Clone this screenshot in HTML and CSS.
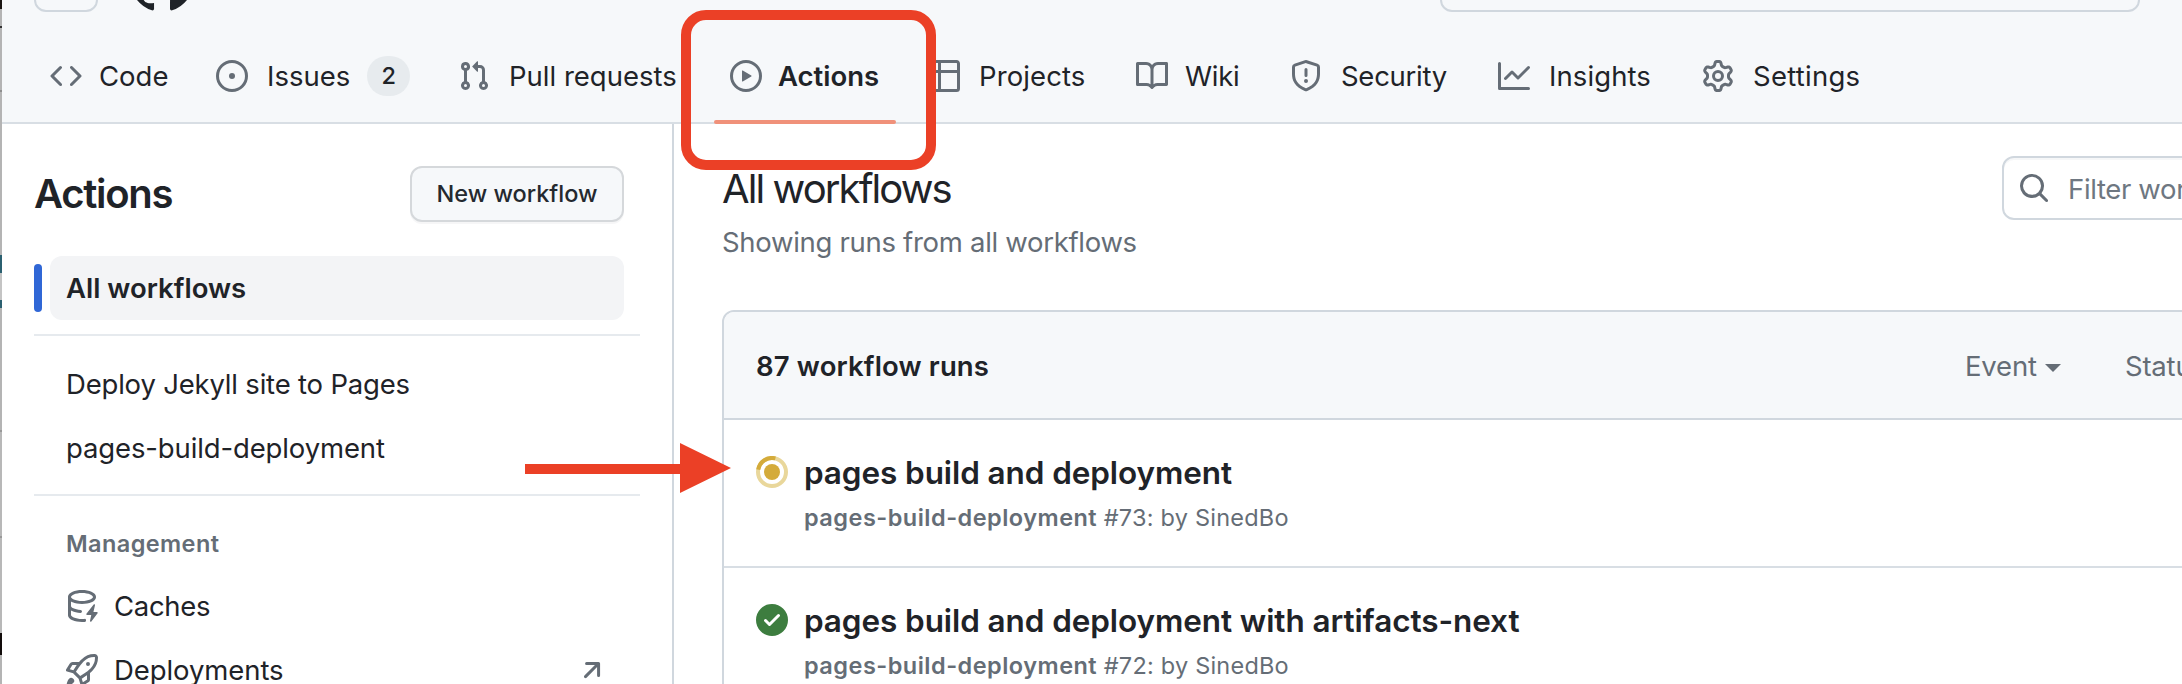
FILE: index.html
```
<!DOCTYPE html>
<html lang="en">
<head>
<meta charset="utf-8">
<title>Workflow runs</title>
<link rel="stylesheet" href="styles.css">
</head>
<body>
<div class="window">
  <div class="edge"></div>
  <div class="page">
    <header class="topbar">
      <span class="menu-button"></span>
      <svg class="mark" viewBox="0 0 16 16"><path d="M8 0c4.42 0 8 3.58 8 8a8.013 8.013 0 0 1-5.45 7.59c-.4.08-.55-.17-.55-.38 0-.27.01-1.13.01-2.2 0-.75-.25-1.23-.54-1.48 1.78-.2 3.65-.88 3.65-3.95 0-.88-.31-1.59-.82-2.15.08-.2.36-1.02-.08-2.12 0 0-.67-.22-2.2.82-.64-.18-1.32-.27-2-.27-.68 0-1.36.09-2 .27-1.53-1.03-2.2-.82-2.2-.82-.44 1.1-.16 1.92-.08 2.12-.51.56-.82 1.28-.82 2.15 0 3.06 1.86 3.75 3.64 3.95-.23.2-.44.55-.51 1.07-.46.21-1.61.55-2.33-.66-.15-.24-.6-.83-1.23-.82-.67.01-.27.38.01.53.34.19.73.9.82 1.13.16.45.68 1.31 2.69.94 0 .67.01 1.3.01 1.49 0 .21-.15.45-.55.38A7.995 7.995 0 0 1 0 8c0-4.42 3.58-8 8-8Z"/></svg>
      <span class="global-search"></span>
    </header>

    <nav class="tabs">
      <a class="tab"><svg class="icon" viewBox="0 0 16 16"><path d="m11.28 3.22 4.25 4.25a.75.75 0 0 1 0 1.06l-4.25 4.25a.749.749 0 0 1-1.275-.326.749.749 0 0 1 .215-.734L13.94 8l-3.72-3.72a.749.749 0 0 1 .326-1.275.749.749 0 0 1 .734.215Zm-6.56 0a.751.751 0 0 1 1.042.018.751.751 0 0 1 .018 1.042L2.06 8l3.72 3.72a.749.749 0 0 1-.326 1.275.749.749 0 0 1-.734-.215L.47 8.53a.75.75 0 0 1 0-1.06Z"/></svg><span>Code</span></a>
      <a class="tab roomy"><svg class="icon" viewBox="0 0 16 16"><path d="M8 9.5a1.5 1.5 0 1 0 0-3 1.5 1.5 0 0 0 0 3Z"/><path d="M8 0a8 8 0 1 1 0 16A8 8 0 0 1 8 0ZM1.5 8a6.5 6.5 0 1 0 13 0 6.5 6.5 0 0 0-13 0Z"/></svg><span>Issues</span><span class="counter">2</span></a>
      <a class="tab roomy"><svg class="icon" viewBox="0 0 16 16"><path d="M1.5 3.25a2.25 2.25 0 1 1 3 2.122v5.256a2.251 2.251 0 1 1-1.5 0V5.372A2.25 2.25 0 0 1 1.5 3.25Zm5.677-.177L9.573.677A.25.25 0 0 1 10 .854V2.5h1A2.5 2.5 0 0 1 13.5 5v5.628a2.251 2.251 0 1 1-1.5 0V5a1 1 0 0 0-1-1h-1v1.646a.25.25 0 0 1-.427.177L7.177 3.427a.25.25 0 0 1 0-.354ZM3.75 2.5a.75.75 0 1 0 0 1.5.75.75 0 0 0 0-1.5Zm0 9.5a.75.75 0 1 0 0 1.5.75.75 0 0 0 0-1.5Zm8.25.75a.75.75 0 1 0 1.5 0 .75.75 0 0 0-1.5 0Z"/></svg><span>Pull requests</span></a>
      <a class="tab selected"><svg class="icon" viewBox="0 0 16 16"><path d="M8 0a8 8 0 1 1 0 16A8 8 0 0 1 8 0ZM1.5 8a6.5 6.5 0 1 0 13 0 6.5 6.5 0 0 0-13 0Zm4.879-2.773 4.264 2.559a.25.25 0 0 1 0 .428l-4.264 2.559A.25.25 0 0 1 6 10.559V5.442a.25.25 0 0 1 .379-.215Z"/></svg><span>Actions</span></a>
      <a class="tab roomy wide"><svg class="icon" viewBox="0 0 16 16"><path d="M0 1.75C0 .784.784 0 1.75 0h12.5C15.216 0 16 .784 16 1.75v12.5A1.75 1.75 0 0 1 14.25 16H1.75A1.75 1.75 0 0 1 0 14.25ZM6.5 6.5v8h7.75a.25.25 0 0 0 .25-.25V6.5Zm8-1.5V1.75a.25.25 0 0 0-.25-.25H6.5V5Zm-13 1.5v7.75c0 .138.112.25.25.25H5v-8ZM5 5V1.5H1.75a.25.25 0 0 0-.25.25V5Z"/></svg><span>Projects</span></a>
      <a class="tab narrow"><svg class="icon" viewBox="0 0 16 16"><path d="M0 1.75A.75.75 0 0 1 .75 1h4.253c1.227 0 2.317.59 3 1.501A3.743 3.743 0 0 1 11.006 1h4.245a.75.75 0 0 1 .75.75v10.5a.75.75 0 0 1-.75.75h-4.507a2.25 2.25 0 0 0-1.591.659l-.622.621a.75.75 0 0 1-1.06 0l-.622-.621A2.25 2.25 0 0 0 5.258 13H.75a.75.75 0 0 1-.75-.75Zm7.251 10.324.004-5.073-.002-2.253A2.25 2.25 0 0 0 5.003 2.5H1.5v9h3.757a3.75 3.75 0 0 1 1.994.574ZM8.755 4.75l-.004 7.322a3.752 3.752 0 0 1 1.992-.572H14.5v-9h-3.495a2.25 2.25 0 0 0-2.25 2.25Z"/></svg><span>Wiki</span></a>
      <a class="tab roomy narrow"><svg class="icon" viewBox="0 0 16 16"><path d="M7.467.133a1.748 1.748 0 0 1 1.066 0l5.25 1.68A1.75 1.75 0 0 1 15 3.48V7c0 1.566-.32 3.182-1.303 4.682-.983 1.498-2.585 2.813-5.032 3.855a1.697 1.697 0 0 1-1.33 0c-2.447-1.042-4.049-2.357-5.032-3.855C1.32 10.182 1 8.566 1 7V3.48a1.755 1.755 0 0 1 1.217-1.667Zm.61 1.429a.25.25 0 0 0-.153 0l-5.25 1.68a.25.25 0 0 0-.174.238V7c0 1.358.275 2.666 1.057 3.86.784 1.194 2.121 2.34 4.366 3.297a.196.196 0 0 0 .154 0c2.245-.956 3.582-2.104 4.366-3.298C13.225 9.666 13.5 8.36 13.5 7V3.48a.251.251 0 0 0-.174-.237l-5.25-1.68ZM8.75 4.75v3a.75.75 0 0 1-1.5 0v-3a.75.75 0 0 1 1.5 0ZM9 10.5a1 1 0 1 1-2 0 1 1 0 0 1 2 0Z"/></svg><span>Security</span></a>
      <a class="tab roomy wide"><svg class="icon" viewBox="0 0 16 16"><path d="M1.5 1.75V13.5h13.75a.75.75 0 0 1 0 1.5H.75a.75.75 0 0 1-.75-.75V1.75a.75.75 0 0 1 1.5 0Zm14.28 2.53-5.25 5.25a.75.75 0 0 1-1.06 0L7 7.06 4.28 9.78a.751.751 0 0 1-1.042-.018.751.751 0 0 1-.018-1.042l3.25-3.25a.75.75 0 0 1 1.06 0L10 7.94l4.72-4.72a.751.751 0 0 1 1.042.018.751.751 0 0 1 .018 1.042Z"/></svg><span>Insights</span></a>
      <a class="tab roomy wider"><svg class="icon" viewBox="0 0 16 16"><path d="M8 0a8.2 8.2 0 0 1 .701.031C9.444.095 9.99.645 10.16 1.29l.288 1.107c.018.066.079.158.212.224.231.114.454.243.668.386.123.082.233.09.299.071l1.103-.303c.644-.176 1.392.021 1.82.63.27.385.506.792.704 1.218.315.675.111 1.422-.364 1.891l-.814.806c-.049.048-.098.147-.088.294.016.257.016.515 0 .772-.01.147.038.246.088.294l.814.806c.475.469.679 1.216.364 1.891a7.977 7.977 0 0 1-.704 1.217c-.428.61-1.176.807-1.82.63l-1.102-.302c-.067-.019-.177-.011-.3.071a5.909 5.909 0 0 1-.668.386c-.133.066-.194.158-.211.224l-.29 1.106c-.168.646-.715 1.196-1.458 1.26a8.006 8.006 0 0 1-1.402 0c-.743-.064-1.289-.614-1.458-1.26l-.289-1.106c-.018-.066-.079-.158-.212-.224a5.738 5.738 0 0 1-.668-.386c-.123-.082-.233-.09-.299-.071l-1.103.303c-.644.176-1.392-.021-1.82-.63a8.12 8.12 0 0 1-.704-1.218c-.315-.675-.111-1.422.363-1.891l.815-.806c.05-.048.098-.147.088-.294a6.214 6.214 0 0 1 0-.772c.01-.147-.038-.246-.088-.294l-.815-.806C.635 6.045.431 5.298.746 4.623a7.92 7.92 0 0 1 .704-1.217c.428-.61 1.176-.807 1.82-.63l1.102.302c.067.019.177.011.3-.071.214-.143.437-.272.668-.386.133-.066.194-.158.211-.224l.29-1.106C6.009.645 6.556.095 7.299.03 7.53.01 7.764 0 8 0Zm-.571 1.525c-.036.003-.108.036-.137.146l-.289 1.105c-.147.561-.549.967-.998 1.189-.173.086-.34.183-.5.29-.417.278-.97.423-1.529.27l-1.103-.303c-.109-.03-.175.016-.195.045-.22.312-.412.644-.573.99-.014.031-.021.11.059.19l.815.806c.411.406.562.957.53 1.456a4.709 4.709 0 0 0 0 .582c.032.499-.119 1.05-.53 1.456l-.815.806c-.081.08-.073.159-.059.19.162.346.353.677.573.989.02.03.085.076.195.046l1.102-.303c.56-.153 1.113-.008 1.53.27.161.107.328.204.501.29.447.222.85.629.997 1.189l.289 1.105c.029.109.101.143.137.146a6.6 6.6 0 0 0 1.142 0c.036-.003.108-.036.137-.146l.289-1.105c.147-.561.549-.967.998-1.189.173-.086.34-.183.5-.29.417-.278.97-.423 1.529-.27l1.103.303c.109.029.175-.016.195-.045.22-.313.411-.644.573-.99.014-.031.021-.11-.059-.19l-.815-.806c-.411-.406-.562-.957-.53-1.456a4.709 4.709 0 0 0 0-.582c-.032-.499.119-1.05.53-1.456l.815-.806c.081-.08.073-.159.059-.19a6.464 6.464 0 0 0-.573-.989c-.02-.03-.085-.076-.195-.046l-1.102.303c-.56.153-1.113.008-1.53-.27a4.44 4.44 0 0 0-.501-.29c-.447-.222-.85-.629-.997-1.189l-.289-1.105c-.029-.11-.101-.143-.137-.146a6.6 6.6 0 0 0-1.142 0ZM11 8a3 3 0 1 1-6 0 3 3 0 0 1 6 0ZM9.5 8a1.5 1.5 0 1 0-3.001.001A1.5 1.5 0 0 0 9.5 8Z"/></svg><span>Settings</span></a>
    </nav>

    <div class="columns">
      <aside class="sidebar">
        <div class="sidebar-head"><h2>Actions</h2><button class="new-workflow">New workflow</button></div>
        <div class="current-row"><span class="current-bar"></span><a class="current">All workflows</a></div>
        <hr class="rule">
        <a class="side-link deploy">Deploy Jekyll site to Pages</a>
        <a class="side-link">pages-build-deployment</a>
        <hr class="rule">
        <h3 class="group-title">Management</h3>
        <a class="side-link tool caches"><svg class="icon" viewBox="0 0 16 16"><path d="M2.5 5.724V8c0 .248.238.7 1.169 1.159.874.43 2.144.745 3.62.822a.75.75 0 1 1-.078 1.498c-1.622-.085-3.102-.432-4.204-.975a5.565 5.565 0 0 1-.507-.28V12.5c0 .133.058.318.282.551.227.237.591.483 1.101.707 1.015.447 2.47.742 4.117.742.406 0 .802-.018 1.183-.052a.751.751 0 1 1 .134 1.494C8.89 15.98 8.45 16 8 16c-1.805 0-3.475-.32-4.721-.869-.623-.274-1.173-.619-1.579-1.041-.408-.425-.7-.964-.7-1.59v-9c0-.626.292-1.165.7-1.591.406-.42.956-.766 1.579-1.04C4.525.32 6.195 0 8 0c1.806 0 3.476.32 4.721.869.623.274 1.173.619 1.579 1.041.408.425.7.964.7 1.59 0 .626-.292 1.165-.7 1.591-.406.42-.956.766-1.578 1.04C11.475 6.68 9.805 7 8 7c-1.805 0-3.475-.32-4.721-.869a6.15 6.15 0 0 1-.779-.407Zm0-2.224c0 .133.058.318.282.551.227.237.591.483 1.101.707C4.898 5.205 6.353 5.5 8 5.5c1.646 0 3.101-.295 4.118-.742.508-.224.873-.471 1.1-.708.224-.232.282-.417.282-.55 0-.133-.058-.318-.282-.551-.227-.237-.591-.483-1.101-.707C11.102 1.795 9.647 1.5 8 1.5c-1.646 0-3.101.295-4.118.742-.508.224-.873.471-1.1.708-.224.232-.282.417-.282.55Z"/><path d="M14.49 7.582a.375.375 0 0 0-.66-.313l-3.625 4.625a.375.375 0 0 0 .295.606h2.127l-.619 2.922a.375.375 0 0 0 .666.304l3.125-4.125A.375.375 0 0 0 15.5 11h-1.778l.769-3.418Z"/></svg><span>Caches</span></a>
        <a class="side-link tool"><svg class="icon" viewBox="0 0 16 16"><path d="M14.064 0h.186C15.216 0 16 .784 16 1.75v.186a8.752 8.752 0 0 1-2.564 6.186l-.458.459c-.314.314-.641.616-.979.904v3.207c0 .608-.315 1.172-.833 1.49l-2.774 1.707a.749.749 0 0 1-1.11-.418l-.954-3.102a1.214 1.214 0 0 1-.145-.125L3.754 9.816a1.218 1.218 0 0 1-.124-.145L.528 8.717a.749.749 0 0 1-.418-1.11l1.71-2.774A1.748 1.748 0 0 1 3.31 4h3.204c.288-.338.59-.665.904-.979l.459-.458A8.749 8.749 0 0 1 14.064 0ZM8.938 3.623h-.002l-.458.458c-.76.76-1.437 1.598-2.02 2.5l-1.5 2.317 2.143 2.143 2.317-1.5c.902-.583 1.74-1.26 2.499-2.02l.459-.458a7.25 7.25 0 0 0 2.123-5.127V1.75a.25.25 0 0 0-.25-.25h-.186a7.249 7.249 0 0 0-5.125 2.123ZM3.56 14.56c-.732.732-2.334 1.045-3.005 1.148a.234.234 0 0 1-.201-.064.234.234 0 0 1-.064-.201c.103-.671.416-2.273 1.15-3.003a1.502 1.502 0 1 1 2.12 2.12Zm6.94-3.935c-.088.06-.177.118-.266.175l-2.35 1.521.548 1.783 1.949-1.2a.25.25 0 0 0 .119-.213ZM3.678 8.116 5.2 5.766c.058-.09.117-.178.176-.266H3.309a.25.25 0 0 0-.213.119l-1.2 1.95ZM12 5a1 1 0 1 1-2 0 1 1 0 0 1 2 0Z"/></svg><span>Deployments</span><svg class="icon external" viewBox="0 0 16 16"><path d="M4.53 4.75A.75.75 0 0 1 5.28 4h6.01a.75.75 0 0 1 .75.75v6.01a.75.75 0 0 1-1.5 0v-4.2l-5.26 5.261a.749.749 0 0 1-1.275-.326.749.749 0 0 1 .215-.734L9.48 5.5h-4.2a.75.75 0 0 1-.75-.75Z"/></svg></a>
      </aside>

      <main class="content">
        <div class="content-head">
          <div>
            <h1>All workflows</h1>
            <p class="subtitle">Showing runs from all workflows</p>
          </div>
          <div class="filter"><svg class="icon" viewBox="0 0 16 16"><path d="M10.68 11.74a6 6 0 0 1-7.922-8.982 6 6 0 0 1 8.982 7.922l3.04 3.04a.749.749 0 0 1-.326 1.275.749.749 0 0 1-.734-.215ZM11.5 7a4.499 4.499 0 1 0-8.997 0A4.499 4.499 0 0 0 11.5 7Z"/></svg><span>Filter workflow runs</span></div>
        </div>
        <section class="runs">
          <div class="runs-head">
            <strong>87 workflow runs</strong>
            <span class="picker">Event<i class="caret"></i></span>
            <span class="picker">Status<i class="caret"></i></span>
          </div>
          <article class="run">
            <svg class="state" viewBox="0 0 16 16"><circle class="ring" cx="8" cy="8" r="7"/><path class="arc" d="M1.1 6.8a7 7 0 0 1 8.6-5.6"/><circle class="core" cx="8" cy="8" r="4"/></svg>
            <div><h4>pages build and deployment</h4><p><b>pages-build-deployment</b> <span>#73: by SinedBo</span></p></div>
          </article>
          <article class="run">
            <svg class="state ok" viewBox="0 0 16 16"><path d="M8 16A8 8 0 1 1 8 0a8 8 0 0 1 0 16Zm3.78-9.72a.751.751 0 0 0-.018-1.042.751.751 0 0 0-1.042-.018L6.75 9.19 5.28 7.72a.751.751 0 0 0-1.042.018.751.751 0 0 0-.018 1.042l2 2a.75.75 0 0 0 1.06 0Z"/></svg>
            <div><h4>pages build and deployment with artifacts-next</h4><p><b>pages-build-deployment</b> <span>#72: by SinedBo</span></p></div>
          </article>
        </section>
      </main>
    </div>
  </div>
  <div class="highlight"></div>
  <svg class="pointer" viewBox="0 0 206 50"><path d="M0 21H155V0L206 25 155 50V31H0Z"/></svg>
</div>
</body>
</html>
```
FILE: styles.css
```
* { box-sizing: border-box; }

body {
  margin: 0;
  background: #fff;
  color: #1f2328;
  font: 430 27.5px/64px Inter, "Noto Sans", sans-serif;
}

h1, h2, h3, h4, p { margin: 0; }

.window {
  position: relative;
  display: flex;
  width: 2182px;
  height: 684px;
  overflow: hidden;
}

/* Sliver of the windows behind, visible along the left side */
.edge {
  flex: none;
  width: 2px;
  background: linear-gradient(#1a1512 0 9px, #b4b4b4 9px 26px, #333 26px 28px, #b4b4b4 28px 90px, #8e8e8e 90px 92px, #b4b4b4 92px 255px, #2b6070 255px 273px, #c4c4c4 273px 300px, #2b6070 300px 308px, #b4b4b4 308px 430px, #999 430px 432px, #b8b8b8 432px 536px, #999 536px 538px, #b8b8b8 538px 633px, #120c0b 633px 655px, #b4b4b4 655px);
}

.page {
  flex: none;
  display: flex;
  flex-direction: column;
  width: 2180px;
}

.icon {
  flex: none;
  width: 32px;
  height: 32px;
  fill: #656d76;
}

.topbar {
  display: flex;
  align-items: flex-end;
  height: 12px;
  padding-left: 32px;
  overflow: hidden;
  background: #f6f8fa;
}

.menu-button {
  width: 64px;
  height: 64px;
  border: 2px solid #d0d7de;
  border-radius: 12px;
}

.mark {
  flex: none;
  width: 64px;
  height: 64px;
  margin-left: 32px;
  fill: #1f2328;
}

.global-search {
  width: 700px;
  height: 64px;
  margin-left: 1246px;
  border: 2px solid #d0d7de;
  border-radius: 12px;
}

.tabs {
  display: grid;
  grid-template-columns: 150px 226px 256px 182px 192px 138px 192px 188px 190px;
  column-gap: 16px;
  height: 112px;
  padding: 32px 0 14px 32px;
  border-bottom: 2px solid #d8dee4;
  background: #f6f8fa;
}

.tab {
  position: relative;
  display: flex;
  align-items: center;
  gap: 17px;
  padding: 0 16px;
  white-space: nowrap;
}

.roomy { gap: 19px; }
.wide { letter-spacing: 0.1px; }
.wider { letter-spacing: 0.25px; }
.narrow { letter-spacing: -0.27px; }

.selected {
  gap: 16px;
  font-weight: 600;
}

.selected::after {
  content: "";
  position: absolute;
  left: 0;
  right: 0;
  bottom: -16px;
  height: 4px;
  border-radius: 2px;
  background: #f0917a;
}

.counter {
  width: 43px;
  height: 40px;
  margin-left: -2px;
  border-radius: 20px;
  background: #e7ebee;
  font-size: 23.5px;
  font-weight: 500;
  line-height: 40px;
  text-align: center;
}

.columns {
  display: flex;
  height: 560px;
}

.sidebar {
  flex: none;
  width: 672px;
  padding: 42px 32px 0;
  border-right: 2px solid #d0d7de;
}

.sidebar-head {
  display: flex;
  align-items: center;
  justify-content: space-between;
  height: 56px;
  padding-right: 16px;
}

.sidebar-head h2 {
  font-size: 40px;
  font-weight: 600;
  letter-spacing: -1.3px;
}

.new-workflow {
  width: 214px;
  height: 56px;
  padding: 0;
  border: 2px solid #d5d8db;
  border-radius: 12px;
  background: #f6f8fa;
  box-shadow: 0 2px 0 rgba(31, 35, 40, 0.04);
  color: #24292f;
  font: 500 23.5px/52px Inter, "Noto Sans", sans-serif;
}

.current-row {
  display: flex;
  align-items: center;
  gap: 8px;
  margin-top: 34px;
}

.current-bar {
  width: 8px;
  height: 48px;
  border-radius: 4px;
  background: #3067d6;
}

.current {
  width: 574px;
  height: 64px;
  padding-left: 16px;
  border-radius: 12px;
  background: #f3f4f6;
  font-weight: 600;
}

.rule {
  height: 2px;
  margin: 14px 0 16px;
  border: 0;
  background: #e6eaee;
}

.side-link {
  display: flex;
  align-items: center;
  height: 64px;
  padding: 0 32px;
  letter-spacing: -0.13px;
}

.deploy { letter-spacing: -0.19px; }

.group-title {
  height: 62px;
  padding-left: 32px;
  color: #656d76;
  font-size: 23.5px;
  font-weight: 600;
  letter-spacing: 0.4px;
}

.tool { gap: 16px; letter-spacing: -0.08px; }
.caches { letter-spacing: -0.3px; }
.external { margin-left: auto; }

.content {
  flex: none;
  width: 1508px;
  padding: 32px 0 0 48px;
}

.content-head {
  display: flex;
  justify-content: space-between;
  height: 154px;
}

h1 {
  height: 56px;
  padding-top: 1px;
  font-size: 40px;
  font-weight: 430;
  letter-spacing: -1.9px;
}

.subtitle {
  height: 60px;
  margin-top: -2px;
  color: #656d76;
  letter-spacing: -0.3px;
}

.filter {
  display: flex;
  align-items: center;
  gap: 18px;
  width: 400px;
  height: 64px;
  margin-right: -220px;
  padding-left: 14px;
  border: 2px solid #d0d7de;
  border-radius: 12px;
  box-shadow: inset 0 2px 0 rgba(208, 215, 222, 0.2);
  color: #6e7781;
  letter-spacing: -0.35px;
  white-space: nowrap;
}

.filter span { padding-top: 2px; }

.runs {
  width: 1600px;
  border: 2px solid #d0d7de;
  border-radius: 12px 12px 0 0;
}

.runs-head {
  display: flex;
  align-items: center;
  height: 108px;
  padding: 2px 0 0 32px;
  border-bottom: 2px solid #d0d7de;
  border-radius: 10px 10px 0 0;
  background: #f6f8fa;
}

.runs-head strong {
  width: 1209px;
  font-weight: 600;
  letter-spacing: 0.15px;
}

.picker {
  display: flex;
  align-items: center;
  gap: 8px;
  width: 160px;
  color: #656d76;
  letter-spacing: -0.2px;
}

.caret {
  margin-top: 3px;
  border: 8px solid transparent;
  border-top-color: #656d76;
  border-bottom: 0;
}

.run {
  display: flex;
  gap: 16px;
  height: 148px;
  padding: 30px 0 0 32px;
  border-bottom: 2px solid #d8dee4;
}

.run h4 {
  font-size: 31.5px;
  font-weight: 600;
  line-height: 46px;
  letter-spacing: -0.09px;
}

.run p {
  color: #656d76;
  font-size: 23.5px;
  line-height: 44px;
}

.run b {
  font-weight: 600;
  letter-spacing: 0.48px;
}

.run p span { letter-spacing: 0.22px; }

.state {
  flex: none;
  width: 32px;
  height: 32px;
  margin-top: 6px;
}

.ring, .arc { fill: none; stroke-width: 2; }
.ring { stroke: #e9d79b; }
.arc { stroke: #d4ab3a; }
.core { fill: #d4ab3a; }
.ok { fill: #3d7d3f; }

/* Annotations over the page */
.highlight {
  position: absolute;
  left: 681px;
  top: 10px;
  width: 255px;
  height: 160px;
  border: 10px solid #eb4026;
  border-radius: 25px;
}

.pointer {
  position: absolute;
  left: 525px;
  top: 443px;
  width: 206px;
  height: 50px;
  fill: #eb4026;
}
```
